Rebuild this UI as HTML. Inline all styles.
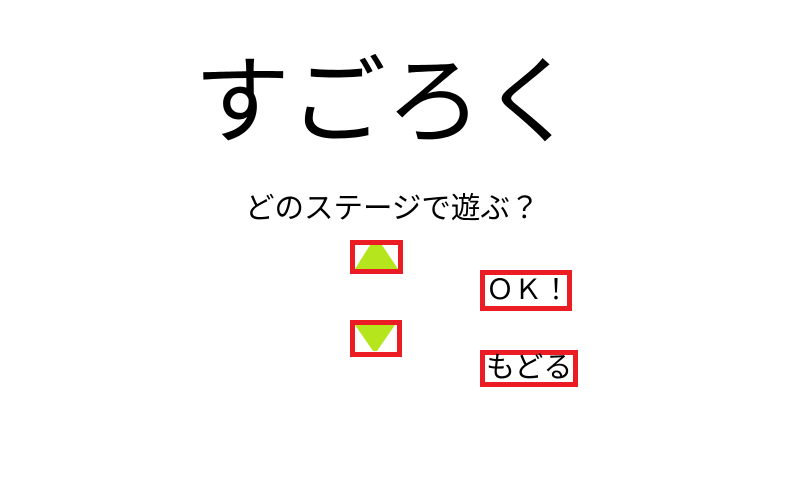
<!DOCTYPE html>
<html><head><meta charset="utf-8"><style>
body{margin:0;width:800px;height:481px;background:#fff;position:relative;overflow:hidden;font-family:"Liberation Sans","Noto Sans CJK JP",sans-serif;color:#000}
.t{position:absolute;white-space:nowrap;line-height:1}
.box{position:absolute;border:5px solid #ec1c24;box-sizing:border-box;background:#fff}
</style></head><body>
<div class="t" style="left:194px;top:55px;font-size:96px">すごろく</div>
<div class="t" style="left:245px;top:194px;font-size:29.5px">どのステージで遊ぶ？</div>
<div class="box" style="left:350px;top:240px;width:53px;height:34px"></div>
<svg style="position:absolute;left:0;top:0" width="800" height="481"><polygon points="355,269 370,245 382,245 398,269" fill="#b5e61d"/><polygon points="355,325 395,325 377,351 373,351" fill="#b5e61d"/></svg>
<div class="box" style="left:350px;top:320px;width:52px;height:37px;background:none"></div>
<div class="box" style="left:480px;top:270px;width:92px;height:41px"></div>
<div class="t" style="left:486px;top:276px;font-size:28px">ＯＫ！</div>
<div class="box" style="left:480px;top:350px;width:98px;height:37px"></div>
<div class="t" style="left:486px;top:354px;font-size:29px">もどる</div>
</body></html>
